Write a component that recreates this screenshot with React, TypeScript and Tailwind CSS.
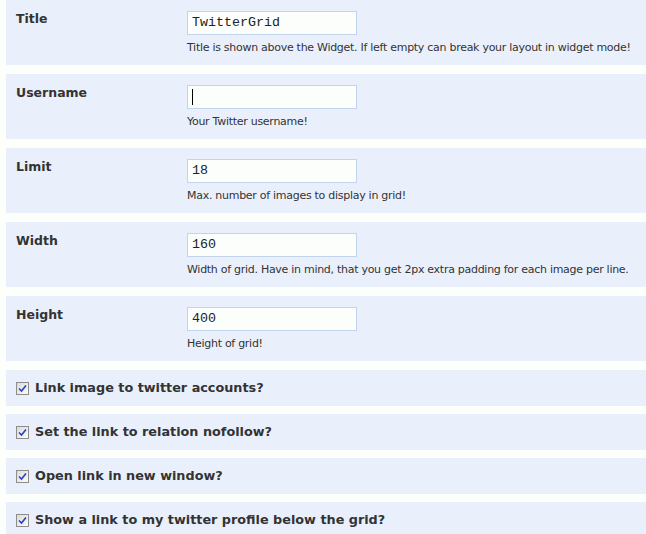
import React from "react";

const font = { fontFamily: '"DejaVu Sans", Verdana, sans-serif' };

function Field({ label, value, help, cursor }: { label: string; value: string; help: string; cursor?: boolean }) {
  return (
    <div className="flex h-[65px] shrink-0 bg-[#eaf0fb] pl-[10px]">
      <div className="w-[171px] shrink-0 pt-[10px] text-[12.5px] font-bold text-[#333]">{label}</div>
      <div className="flex flex-col pt-[11px]">
        <div className="flex h-[24px] w-[170px] items-center border border-[#c3d5ee] bg-[#fcfefb] px-[4px] text-[13.33px] text-[#222]" style={{ fontFamily: '"Liberation Mono", monospace' }}>
          {cursor ? <span className="h-[16px] w-px bg-black" /> : value}
        </div>
        <div className="mt-[5px] whitespace-nowrap text-[11px] tracking-[-0.28px] text-[#333]">{help}</div>
      </div>
    </div>
  );
}

function Check({ label }: { label: string }) {
  return (
    <div className="flex h-[36px] shrink-0 items-center bg-[#eaf0fb] pl-[10px]">
      <span className="flex h-[13px] w-[13px] items-center justify-center border border-[#8d8d8d] bg-gradient-to-br from-[#dcdcd6] to-[#fbfbf9]">
        <svg width="9" height="9" viewBox="0 0 9 9">
          <path d="M1 4.5 L3.5 7 L8 1.5" stroke="#2a3fc8" strokeWidth="1.6" fill="none" />
        </svg>
      </span>
      <span className="ml-[6px] text-[12.8px] font-bold text-[#333]">{label}</span>
    </div>
  );
}

export default function App() {
  return (
    <div className="flex h-[534px] w-[646px] flex-col overflow-hidden bg-[#fdfffb] pl-[6px]" style={font}>
      <div className="flex flex-col gap-[9px]">
        <Field label="Title" value="TwitterGrid" help="Title is shown above the Widget. If left empty can break your layout in widget mode!" />
        <Field label="Username" value="" cursor help="Your Twitter username!" />
        <Field label="Limit" value="18" help="Max. number of images to display in grid!" />
        <Field label="Width" value="160" help="Width of grid. Have in mind, that you get 2px extra padding for each image per line." />
        <Field label="Height" value="400" help="Height of grid!" />
      </div>
      <div className="mt-[9px] flex flex-col gap-[8px]">
        <Check label="Link image to twitter accounts?" />
        <Check label="Set the link to relation nofollow?" />
        <Check label="Open link in new window?" />
        <Check label="Show a link to my twitter profile below the grid?" />
      </div>
    </div>
  );
}
